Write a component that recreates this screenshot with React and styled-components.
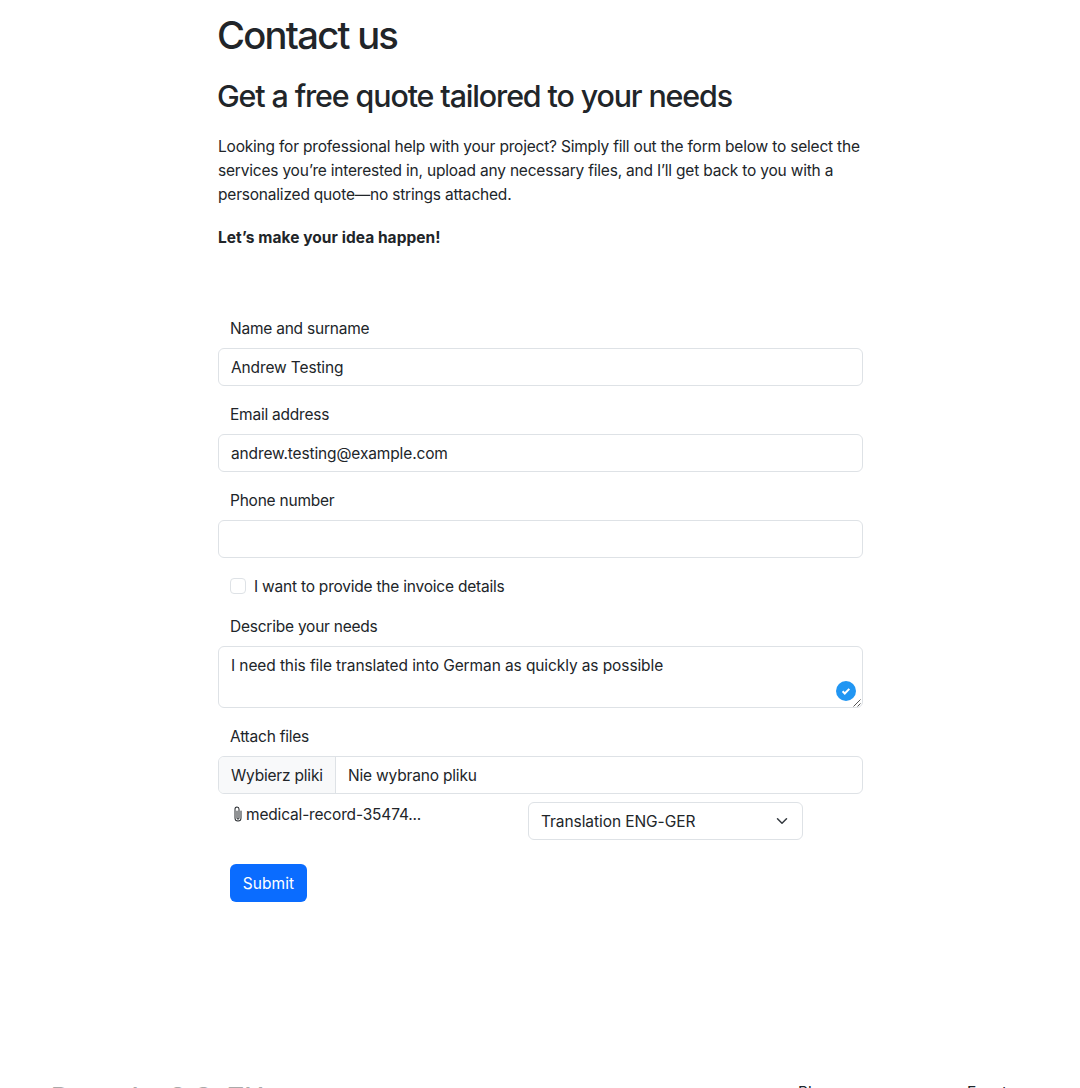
import { useState } from "react";
import styled, { createGlobalStyle } from "styled-components";
import { BsPaperclip } from "react-icons/bs";

const App = () => {
  const [name, setName] = useState("Andrew Testing");
  const [email, setEmail] = useState("andrew.testing@example.com");
  const [phone, setPhone] = useState("");
  const [needs, setNeeds] = useState("I need this file translated into German as quickly as possible");
  const [invoice, setInvoice] = useState(false);

  return (
    <Page>
      <GlobalStyle />
      <Container>
        <Title>Contact us</Title>
        <Subtitle>Get a free quote tailored to your needs</Subtitle>
        <Lead>
          Looking for professional help with your project? Simply fill out the form below to select the
          <br />
          services you’re interested in, upload any necessary files, and I’ll get back to you with a
          <br />
          personalized quote—no strings attached.
        </Lead>
        <Slogan>Let’s make your idea happen!</Slogan>

        <Form onSubmit={(e) => e.preventDefault()}>
          <Field>
            <Label htmlFor="name">Name and surname</Label>
            <Input id="name" value={name} onChange={(e) => setName(e.target.value)} />
          </Field>
          <Field>
            <Label htmlFor="email">Email address</Label>
            <Input id="email" value={email} onChange={(e) => setEmail(e.target.value)} />
          </Field>
          <Field>
            <Label htmlFor="phone">Phone number</Label>
            <Input id="phone" value={phone} onChange={(e) => setPhone(e.target.value)} />
          </Field>
          <Check>
            <Checkbox type="checkbox" checked={invoice} onChange={() => setInvoice(!invoice)} />
            <Text $spacing={-0.22}>I want to provide the invoice details</Text>
          </Check>
          <Field>
            <Label htmlFor="needs">Describe your needs</Label>
            <TextAreaWrap>
              <TextArea id="needs" value={needs} onChange={(e) => setNeeds(e.target.value)} />
              <CheckedBadge width="20" height="20" viewBox="0 0 20 20">
                <circle cx="10" cy="10" r="10" fill="#2196f3" />
                <path d="M6.6 10.2l2.2 2.3 4.5-4.6" fill="none" stroke="#fff" strokeWidth="2" />
              </CheckedBadge>
              <Grip width="9" height="9" viewBox="0 0 9 9">
                <path d="M0.5 8.5L7.5 1.5M4.5 8.5L7.5 5.5" stroke="#555" strokeWidth="1" />
              </Grip>
            </TextAreaWrap>
          </Field>
          <Field $last>
            <Label>Attach files</Label>
            <FilePicker>
              <FileButton type="button"><Text $spacing={-0.2}>Wybierz pliki</Text></FileButton>
              <FileText><Text $spacing={-0.18}>Nie wybrano pliku</Text></FileText>
            </FilePicker>
          </Field>
          <FileRow>
            <FileName>
              <BsPaperclip size={16} />
              <Text $spacing={-0.17}>medical-record-35474...</Text>
            </FileName>
            <Select>
              <Text $spacing={-0.07}>Translation ENG-GER</Text>
              <svg width="16" height="12" viewBox="0 0 16 16">
                <path d="m2 5 6 6 6-6" fill="none" stroke="#343a40" strokeWidth="2" strokeLinecap="round" strokeLinejoin="round" />
              </svg>
            </Select>
          </FileRow>
          <Submit type="submit"><Text $spacing={0.05}>Submit</Text></Submit>
        </Form>
      </Container>
      <Footer>
        <Brand>Danuska S.C. ZU</Brand>
        <FooterLink>Blog</FooterLink>
        <FooterLink>Events</FooterLink>
      </Footer>
    </Page>
  );
};

const GlobalStyle = createGlobalStyle`
  * {
    box-sizing: border-box;
  }
  body {
    margin: 0;
    background: #fff;
    color: #212529;
    font-family: Inter, "Liberation Sans", sans-serif;
    font-size: 15.5px;
    line-height: 24px;
    letter-spacing: -0.2px;
  }
  input, textarea, button {
    font: inherit;
    color: inherit;
    letter-spacing: inherit;
  }
`;

const Page = styled.div`
  display: flex;
  flex-direction: column;
  height: 1088px;
  overflow: hidden;
`;

const Container = styled.main`
  flex: none;
  width: 645px;
  height: 1080px;
  margin-left: 218px;
  padding-top: 11px;
`;

const Title = styled.h1`
  margin: 0 0 18px -1px;
  font-size: 38.2px;
  font-weight: 500;
  line-height: 48px;
  letter-spacing: -1.75px;
`;

const Subtitle = styled.h2`
  margin: 0 0 20px -1px;
  font-size: 30.4px;
  font-weight: 500;
  line-height: 38px;
  letter-spacing: -1.12px;
`;

const Lead = styled.p`
  margin: 0 0 19px;
  white-space: nowrap;
`;

const Slogan = styled.p`
  margin: 0 0 66px;
  font-weight: 700;
  letter-spacing: 0.05px;
`;

const Form = styled.form`
  display: flex;
  flex-direction: column;
`;

const Field = styled.div`
  display: flex;
  flex-direction: column;
  gap: 7px;
  margin-bottom: ${(p) => (p.$last ? 8 : 16)}px;
`;

const Label = styled.label`
  align-self: flex-start;
  margin-left: 12px;
  padding-top: 1px;
  letter-spacing: -0.23px;
`;

const Text = styled.span`
  display: block;
  padding-top: 2px;
  white-space: nowrap;
  letter-spacing: ${(p) => p.$spacing}px;
`;

const Input = styled.input`
  height: 38px;
  padding: 6px 12px;
  border: 1px solid #dee2e6;
  border-radius: 6px;
  outline: none;
  letter-spacing: -0.13px;
`;

const Check = styled.label`
  display: flex;
  align-items: center;
  gap: 8px;
  height: 24px;
  margin: 0 0 16px 12px;
`;

const Checkbox = styled.input`
  appearance: none;
  width: 16px;
  height: 16px;
  margin: 0;
  border: 1px solid #dee2e6;
  border-radius: 4px;
`;

const TextAreaWrap = styled.div`
  position: relative;
  display: flex;
`;

const TextArea = styled.textarea`
  flex: 1;
  height: 62px;
  padding: 7px 12px 5px;
  border: 1px solid #dee2e6;
  border-radius: 6px;
  outline: none;
  resize: none;
  letter-spacing: -0.1px;
`;

const CheckedBadge = styled.svg`
  position: absolute;
  right: 7px;
  bottom: 7px;
`;

const Grip = styled.svg`
  position: absolute;
  right: 1px;
  bottom: 1px;
`;

const FilePicker = styled.div`
  display: flex;
  height: 38px;
  border: 1px solid #dee2e6;
  border-radius: 6px;
  overflow: hidden;
`;

const FileButton = styled.button`
  width: 117px;
  padding: 0 12px;
  border: 0;
  border-right: 1px solid #dee2e6;
  background: #f8f9fa;
  text-align: left;
`;

const FileText = styled.div`
  padding: 5px 12px;
`;

const FileRow = styled.div`
  display: flex;
  justify-content: space-between;
  align-items: flex-start;
  padding: 0 60px 0 12px;
  margin-bottom: 24px;
`;

const FileName = styled.div`
  display: flex;
  align-items: center;
  height: 24px;
`;

const Select = styled.div`
  display: flex;
  align-items: center;
  justify-content: space-between;
  width: 275px;
  height: 38px;
  padding: 0 12px;
  border: 1px solid #dee2e6;
  border-radius: 6px;
`;

const Submit = styled.button`
  align-self: flex-start;
  width: 77px;
  height: 38px;
  margin-left: 12px;
  padding: 0 12px;
  border: 0;
  border-radius: 6px;
  background: #0a6cff;
  color: #fff;
`;

const Footer = styled.footer`
  display: grid;
  grid-template-columns: 747px 169px 1fr;
  flex: none;
  padding-left: 51px;
`;

const Brand = styled.div`
  padding-top: 2px;
  color: #aaa;
  font-size: 27px;
  font-weight: 500;
  line-height: 32px;
`;

const FooterLink = styled.a`
  padding-top: 1px;
  color: #212529;
`;

export default App;
